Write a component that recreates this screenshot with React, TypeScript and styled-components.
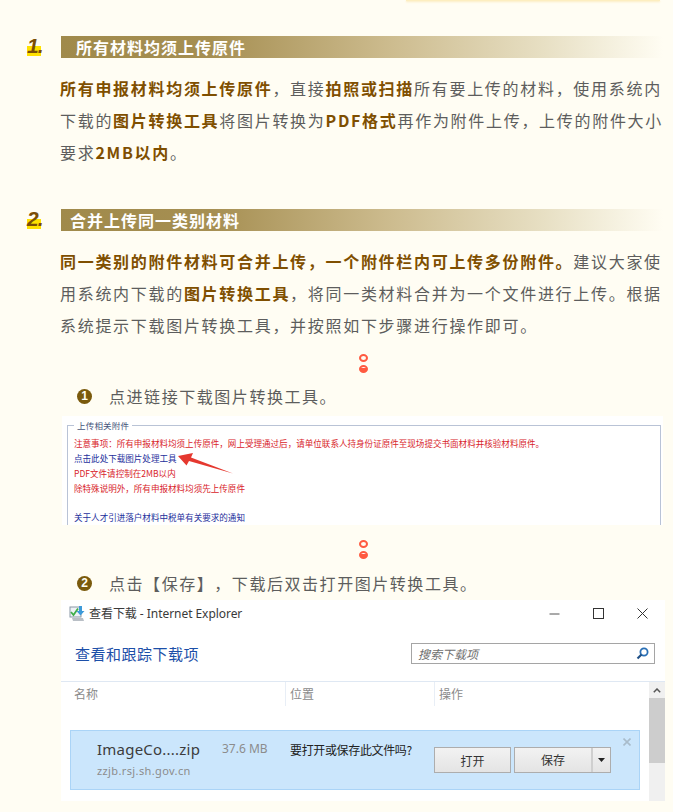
import styled, { createGlobalStyle } from "styled-components";

const GlobalStyle = createGlobalStyle`
  html, body {
    margin: 0;
    padding: 0;
    background: #fffdf3;
  }
  body {
    font-family: "Microsoft YaHei", "Noto Sans CJK SC", "Noto Sans", sans-serif;
    text-spacing-trim: space-all;
  }
`;

const Page = styled.div`
  width: 673px;
  height: 812px;
  overflow: hidden;
  position: relative;
`;

const TopCard = styled.div`
  width: 254px;
  height: 1px;
  margin-left: 406px;
  background: #fdeec0;
  box-shadow: 0 1px 2px #fbe6ae;
`;

const Section = styled.section<{ $top: number }>`
  margin-top: ${(p) => p.$top}px;
`;

const HeadRow = styled.div`
  display: flex;
  height: 22px;
`;

const Num = styled.div`
  width: 61px;
  flex: none;
  padding-left: 27px;
  box-sizing: border-box;
`;

const NumMark = styled.span`
  display: block;
  width: 15px;
  height: 22px;
  font: italic 700 21px/20px "Liberation Sans", sans-serif;
  letter-spacing: -1px;
  color: #7a4e06;
  background: linear-gradient(#ffe100, #ffe100) no-repeat 0 10px / 14px 10px;
`;

const HeadBar = styled.h2<{ $pad: number }>`
  flex: none;
  width: 602px;
  height: 22px;
  margin: 0;
  padding-left: ${(p) => p.$pad}px;
  box-sizing: border-box;
  background: linear-gradient(90deg, #a08a4b 0%, #a68f52 25%, #cdbc8f 55%, #e7dfc3 80%, #fffdf3 100%);
  color: #fff;
  font-size: 16px;
  font-weight: 700;
  line-height: 22px;
  letter-spacing: 1px;
`;

const Para = styled.p`
  width: 602px;
  margin: 14px 0 0 60px;
  font-size: 16px;
  line-height: 32px;
  letter-spacing: 1.7px;
  color: #5d5d5d;
  white-space: nowrap;
`;

const Em = styled.b`
  color: #7f4f00;
  font-weight: 700;
`;

const Dots = styled.div<{ $top: number }>`
  display: flex;
  flex-direction: column;
  align-items: center;
  gap: 3px;
  width: 9px;
  margin: ${(p) => p.$top}px 0 0 359px;
`;

const Ring = styled.div`
  width: 9px;
  height: 8px;
  box-sizing: border-box;
  border: 2px solid #ff5a40;
  border-radius: 50%;
  background: #fffdf3;
`;

const Dot = styled(Ring)`
  background: linear-gradient(#fff 0 30%, #ff5a40 30%);
`;

const Step = styled.div<{ $top: number }>`
  display: flex;
  align-items: center;
  height: 24px;
  margin-top: ${(p) => p.$top}px;
  padding-left: 77px;
  font-size: 16px;
  letter-spacing: 1.55px;
  color: #5d5d5d;
`;

const StepBadge = styled.span`
  flex: none;
  width: 15px;
  height: 15px;
  margin-right: 17px;
  border-radius: 50%;
  background: #7a5a0c;
  color: #fffdf3;
  font: 700 12px/15px "Liberation Sans", sans-serif;
  letter-spacing: 0;
  text-align: center;
`;

/* first screenshot: attachment notes */
const Shot = styled.div`
  width: 601px;
  height: 109px;
  margin: 8px 0 0 62px;
  padding: 9px 2px 0 5px;
  box-sizing: border-box;
  background: #fff;
`;

const Field = styled.div`
  position: relative;
  height: 100px;
  padding: 10px 0 0 6px;
  box-sizing: border-box;
  border: 1px solid #b9c3d6;
  border-width: 1px 1px 0 1px;
  font-size: 8.55px;
  line-height: 15px;
  white-space: nowrap;
`;

const Legend = styled.span`
  position: absolute;
  top: -6px;
  left: 6px;
  padding: 0 3px;
  background: #fff;
  color: #44557a;
  font-size: 8.5px;
  line-height: 11px;
  letter-spacing: 0.2px;
`;

const Note = styled.div<{ $link?: boolean; $gap?: number }>`
  color: ${(p) => (p.$link ? "#1e2f9c" : "#d8242a")};
  margin-top: ${(p) => p.$gap ?? 0}px;
`;

const Arrow = styled.svg`
  position: absolute;
  left: 109px;
  top: 27px;
`;

/* second screenshot: IE download window */
const Win = styled.div`
  width: 604px;
  height: 201px;
  margin: 5px 0 0 61px;
  background: #fff;
  overflow: hidden;
`;

const TitleBar = styled.div`
  display: flex;
  align-items: center;
  height: 26px;
  padding: 0 12px 0 8px;
  font: 12px "Noto Sans", "Noto Sans CJK SC", sans-serif;
  color: #3a3a3a;
`;

const TitleText = styled.span`
  margin-left: 4px;
  letter-spacing: -0.05px;
`;

const WinButtons = styled.div`
  display: flex;
  align-items: center;
  gap: 33px;
  margin-left: auto;
  margin-right: 5px;
`;

const ToolRow = styled.div`
  display: flex;
  align-items: center;
  justify-content: space-between;
  height: 55px;
  padding: 0 10px 0 14px;
  border-bottom: 1px solid #dfe8f3;
`;

const ToolTitle = styled.div`
  font-size: 15px;
  letter-spacing: 0.5px;
  color: #1c4fa8;
`;

const SearchBox = styled.div`
  display: flex;
  align-items: center;
  justify-content: space-between;
  width: 244px;
  height: 21px;
  padding: 0 5px 0 6px;
  box-sizing: border-box;
  border: 1px solid #a5a5a5;
  font-size: 12px;
  font-style: italic;
  color: #6e6e6e;
`;

const ListArea = styled.div`
  display: flex;
  height: 119px;
`;

const ListMain = styled.div`
  flex: 1;
`;

const ColHeads = styled.div`
  display: grid;
  grid-template-columns: 224px 149px 1fr;
  height: 24px;
`;

const ColHead = styled.div`
  padding-left: 13px;
  font-size: 12px;
  line-height: 24px;
  color: #8a8a8a;
  & + & {
    padding-left: 4px;
    border-left: 1px solid #e8eef6;
  }
`;

const Bar = styled.div`
  position: relative;
  display: flex;
  width: 570px;
  height: 60px;
  margin: 24px 0 0 9px;
  box-sizing: border-box;
  border: 1px solid #aad4f7;
  background: #cbe6fc;
`;

const FileCol = styled.div`
  width: 125px;
  padding: 7px 0 0 26px;
  font-family: "Noto Sans", sans-serif;
`;

const FileName = styled.div`
  font-size: 15px;
  line-height: 22px;
  letter-spacing: 0.22px;
  color: #3c3c3c;
  white-space: nowrap;
`;

const FileHost = styled.div`
  margin-top: 4px;
  font-size: 11px;
  line-height: 14px;
  letter-spacing: 0.38px;
  color: #8c8c8c;
`;

const FileSize = styled.div`
  padding-top: 10px;
  width: 68px;
  font: 12px/16px "Noto Sans", sans-serif;
  color: #8c8c8c;
`;

const Ask = styled.div`
  width: 144px;
  padding-top: 10px;
  font-size: 12px;
  line-height: 17px;
  letter-spacing: -0.35px;
  color: #222;
  white-space: nowrap;
`;

const BtnGroup = styled.div`
  display: flex;
  gap: 3px;
  padding-top: 16px;
`;

const Btn = styled.div`
  display: flex;
  align-items: center;
  justify-content: center;
  width: 77px;
  height: 26px;
  box-sizing: border-box;
  border: 1px solid #adadad;
  background: linear-gradient(#f2f2f2, #e4e4e4);
  font-size: 12px;
  color: #333;
`;

const SplitBtn = styled.div`
  display: flex;
  height: 26px;
  box-sizing: border-box;
  border: 1px solid #adadad;
  background: linear-gradient(#f2f2f2, #e4e4e4);
  font-size: 12px;
  color: #333;
`;

const SplitLabel = styled.div`
  width: 76px;
  line-height: 24px;
  text-align: center;
  border-right: 2px solid #cfcfcf;
`;

const SplitCaret = styled.div`
  display: flex;
  align-items: center;
  justify-content: center;
  width: 17px;
`;

const BarClose = styled.svg`
  position: absolute;
  top: 7px;
  right: 8px;
`;

const ScrollTrack = styled.div`
  flex: none;
  width: 16px;
  background: #f0f0f0;
`;

const ScrollUp = styled.div`
  display: flex;
  align-items: center;
  justify-content: center;
  height: 16px;
`;

const ScrollThumb = styled.div`
  height: 65px;
  background: #cdcdcd;
`;

function IeIcon() {
  return (
    <svg width="16" height="17" viewBox="0 0 16 17">
      <rect x="1" y="2" width="11" height="10" fill="#eef2f6" stroke="#8a97a6" />
      <path d="M2 7l2.5 3L9 3.5" fill="none" stroke="#3fae49" strokeWidth="1.8" />
      <path d="M10 1h3v5h2.5l-4 4.5-4-4.5H10z" fill="#3d9ad9" />
      <path d="M3 13h11l1 3H4z" fill="#b9bfc6" />
    </svg>
  );
}

function App() {
  return (
    <Page>
      <GlobalStyle />
      <TopCard />

      <Section $top={35}>
        <HeadRow>
          <Num>
            <NumMark>1.</NumMark>
          </Num>
          <HeadBar $pad={15}>所有材料均须上传原件</HeadBar>
        </HeadRow>
        <Para>
          <Em>所有申报材料均须上传原件</Em>，直接<Em>拍照或扫描</Em>所有要上传的材料，使用系统内
          <br />
          下载的<Em>图片转换工具</Em>将图片转换为<Em>PDF格式</Em>再作为附件上传，上传的附件大小
          <br />
          要求<Em>2MB以内</Em>。
        </Para>
      </Section>

      <Section $top={41}>
        <HeadRow>
          <Num>
            <NumMark>2.</NumMark>
          </Num>
          <HeadBar $pad={9}>合并上传同一类别材料</HeadBar>
        </HeadRow>
        <Para>
          <Em>同一类别的附件材料可合并上传，一个附件栏内可上传多份附件。</Em>建议大家使
          <br />
          用系统内下载的<Em>图片转换工具</Em>，将同一类材料合并为一个文件进行上传。根据
          <br />
          系统提示下载图片转换工具，并按照如下步骤进行操作即可。
        </Para>
      </Section>

      <Dots $top={13}>
        <Ring />
        <Dot />
      </Dots>
      <Step $top={11}>
        <StepBadge>1</StepBadge>
        点进链接下载图片转换工具。
      </Step>

      <Shot>
        <Field>
          <Legend>上传相关附件</Legend>
          <Note>注意事项：所有申报材料均须上传原件，网上受理通过后，请单位联系人持身份证原件至现场提交书面材料并核验材料原件。</Note>
          <Note $link>点击此处下载图片处理工具</Note>
          <Note>PDF文件请控制在2MB以内</Note>
          <Note>除特殊说明外，所有申报材料均须先上传原件</Note>
          <Note $link $gap={14}>关于人才引进落户材料中税单有关要求的通知</Note>
          <Arrow width="58" height="22" viewBox="0 0 58 22">
            <path d="M1 3L16 0L14 4.5L56 20.5L12 8L9.5 12.5Z" fill="#e5382f" />
          </Arrow>
        </Field>
      </Shot>

      <Dots $top={15}>
        <Ring />
        <Dot />
      </Dots>
      <Step $top={12}>
        <StepBadge>2</StepBadge>
        点击【保存】，下载后双击打开图片转换工具。
      </Step>

      <Win>
        <TitleBar>
          <IeIcon />
          <TitleText>查看下载 - Internet Explorer</TitleText>
          <WinButtons>
            <svg width="11" height="11" viewBox="0 0 11 11">
              <path d="M0.5 6h10" stroke="#555" />
            </svg>
            <svg width="11" height="11" viewBox="0 0 11 11">
              <rect x="0.5" y="0.5" width="10" height="10" fill="none" stroke="#333" />
            </svg>
            <svg width="11" height="11" viewBox="0 0 11 11">
              <path d="M0.5 0.5l10 10M10.5 0.5l-10 10" stroke="#333" />
            </svg>
          </WinButtons>
        </TitleBar>
        <ToolRow>
          <ToolTitle>查看和跟踪下载项</ToolTitle>
          <SearchBox>
            搜索下载项
            <svg width="13" height="13" viewBox="0 0 13 13">
              <circle cx="8" cy="5" r="3.6" fill="none" stroke="#2a6fb5" strokeWidth="1.8" />
              <path d="M5.5 7.5L1.5 11.5" stroke="#1f4f86" strokeWidth="2.2" />
            </svg>
          </SearchBox>
        </ToolRow>
        <ListArea>
          <ListMain>
            <ColHeads>
              <ColHead>名称</ColHead>
              <ColHead>位置</ColHead>
              <ColHead>操作</ColHead>
            </ColHeads>
            <Bar>
              <FileCol>
                <FileName>ImageCo....zip</FileName>
                <FileHost>zzjb.rsj.sh.gov.cn</FileHost>
              </FileCol>
              <FileSize>37.6 MB</FileSize>
              <Ask>要打开或保存此文件吗?</Ask>
              <BtnGroup>
                <Btn>打开</Btn>
                <SplitBtn>
                  <SplitLabel>保存</SplitLabel>
                  <SplitCaret>
                    <svg width="7" height="4" viewBox="0 0 7 4">
                      <path d="M0 0h7L3.5 4z" fill="#222" />
                    </svg>
                  </SplitCaret>
                </SplitBtn>
              </BtnGroup>
              <BarClose width="8" height="8" viewBox="0 0 8 8">
                <path d="M0.5 0.5l7 7M7.5 0.5l-7 7" stroke="#a9bccb" strokeWidth="1.6" />
              </BarClose>
            </Bar>
          </ListMain>
          <ScrollTrack>
            <ScrollUp>
              <svg width="8" height="5" viewBox="0 0 8 5">
                <path d="M0.8 4.2L4 1l3.2 3.2" fill="none" stroke="#555" strokeWidth="1.5" />
              </svg>
            </ScrollUp>
            <ScrollThumb />
          </ScrollTrack>
        </ListArea>
      </Win>
    </Page>
  );
}

export default App;
